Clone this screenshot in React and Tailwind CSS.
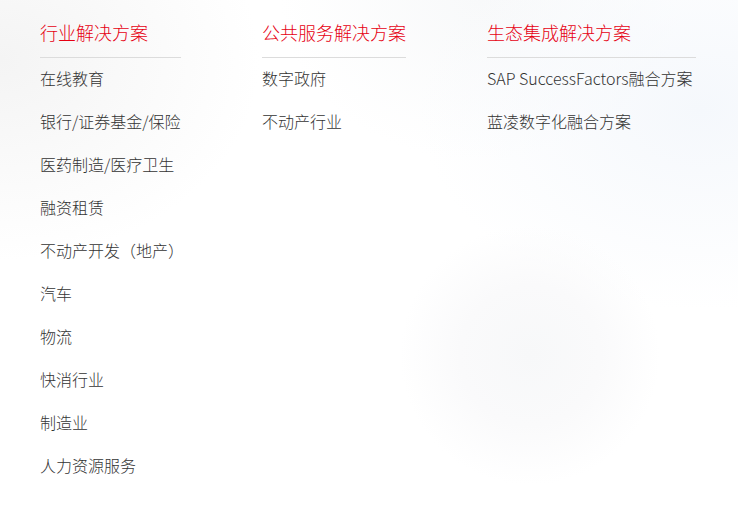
import React from "react";

const columns = [
  {
    title: "行业解决方案",
    width: "w-[141px]",
    items: [
      "在线教育",
      "银行/证券基金/保险",
      "医药制造/医疗卫生",
      "融资租赁",
      "不动产开发（地产）",
      "汽车",
      "物流",
      "快消行业",
      "制造业",
      "人力资源服务",
    ],
  },
  {
    title: "公共服务解决方案",
    width: "w-[144px]",
    items: ["数字政府", "不动产行业"],
  },
  {
    title: "生态集成解决方案",
    width: "w-[209px]",
    items: ["SAP SuccessFactors融合方案", "蓝凌数字化融合方案"],
  },
];

function Column({ title, width, items }) {
  return (
    <div className={`${width} shrink-0`}>
      <div className="text-[18px] leading-[24px] font-light text-[#e60012] pb-[13px] border-b border-[#dcdcdc] whitespace-nowrap">
        {title}
      </div>
      <ul className="-mt-[1px]">
        {items.map((item) => (
          <li
            key={item}
            className="text-[16px] leading-[43px] font-light text-[#333333] whitespace-nowrap"
          >
            {item}
          </li>
        ))}
      </ul>
    </div>
  );
}

export default function App() {
  return (
    <div
      className="w-[738px] h-[516px] overflow-hidden bg-white bg-[radial-gradient(circle_at_530px_355px,#f7f8f9_0px,#fafafb_70px,rgba(255,255,255,0)_130px),radial-gradient(ellipse_260px_200px_at_0px_60px,#f4f4f4_0%,rgba(255,255,255,0)_100%),radial-gradient(ellipse_280px_200px_at_700px_110px,#f5f8fc_0%,rgba(255,255,255,0)_100%),radial-gradient(ellipse_200px_160px_at_480px_0px,#f8f9fa_0%,rgba(255,255,255,0)_100%)]"
      style={{ fontFamily: '"Noto Sans CJK SC", "Noto Sans", sans-serif' }}
    >
      <div className="flex gap-[81px] pl-[40px] pt-[20px]">
        {columns.map((col) => (
          <Column key={col.title} {...col} />
        ))}
      </div>
    </div>
  );
}
